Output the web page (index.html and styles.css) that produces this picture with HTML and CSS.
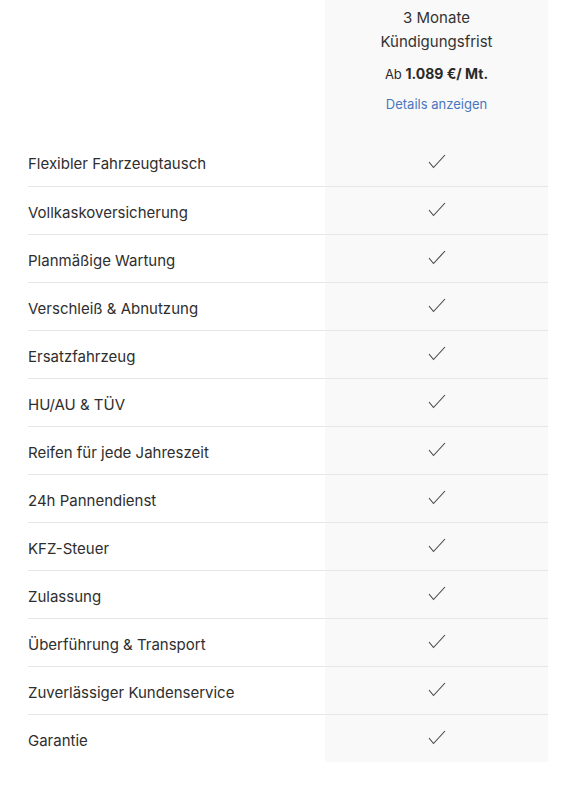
FILE: index.html
```html
<!DOCTYPE html>
<html lang="de">
<head>
<meta charset="utf-8">
<link rel="stylesheet" href="styles.css">
</head>
<body>
<div class="table">
  <div class="row head">
    <div class="label"></div>
    <div class="plan">
      <div class="title">3 Monate<br>Kündigungsfrist</div>
      <div class="price">Ab <b>1.089 €/ Mt.</b></div>
      <a class="details" href="#">Details anzeigen</a>
    </div>
  </div>
  <div class="row"><div class="label">Flexibler Fahrzeugtausch</div><div class="plan"><svg class="check" viewBox="0 0 18 16"><polyline points="1,9 5.5,14.5 17,2"/></svg></div></div>
  <div class="row"><div class="label">Vollkaskoversicherung</div><div class="plan"><svg class="check" viewBox="0 0 18 16"><polyline points="1,9 5.5,14.5 17,2"/></svg></div></div>
  <div class="row"><div class="label">Planmäßige Wartung</div><div class="plan"><svg class="check" viewBox="0 0 18 16"><polyline points="1,9 5.5,14.5 17,2"/></svg></div></div>
  <div class="row"><div class="label">Verschleiß &amp; Abnutzung</div><div class="plan"><svg class="check" viewBox="0 0 18 16"><polyline points="1,9 5.5,14.5 17,2"/></svg></div></div>
  <div class="row"><div class="label">Ersatzfahrzeug</div><div class="plan"><svg class="check" viewBox="0 0 18 16"><polyline points="1,9 5.5,14.5 17,2"/></svg></div></div>
  <div class="row"><div class="label">HU/AU &amp; TÜV</div><div class="plan"><svg class="check" viewBox="0 0 18 16"><polyline points="1,9 5.5,14.5 17,2"/></svg></div></div>
  <div class="row"><div class="label">Reifen für jede Jahreszeit</div><div class="plan"><svg class="check" viewBox="0 0 18 16"><polyline points="1,9 5.5,14.5 17,2"/></svg></div></div>
  <div class="row"><div class="label">24h Pannendienst</div><div class="plan"><svg class="check" viewBox="0 0 18 16"><polyline points="1,9 5.5,14.5 17,2"/></svg></div></div>
  <div class="row"><div class="label">KFZ-Steuer</div><div class="plan"><svg class="check" viewBox="0 0 18 16"><polyline points="1,9 5.5,14.5 17,2"/></svg></div></div>
  <div class="row"><div class="label">Zulassung</div><div class="plan"><svg class="check" viewBox="0 0 18 16"><polyline points="1,9 5.5,14.5 17,2"/></svg></div></div>
  <div class="row"><div class="label">Überführung &amp; Transport</div><div class="plan"><svg class="check" viewBox="0 0 18 16"><polyline points="1,9 5.5,14.5 17,2"/></svg></div></div>
  <div class="row"><div class="label">Zuverlässiger Kundenservice</div><div class="plan"><svg class="check" viewBox="0 0 18 16"><polyline points="1,9 5.5,14.5 17,2"/></svg></div></div>
  <div class="row"><div class="label">Garantie</div><div class="plan"><svg class="check" viewBox="0 0 18 16"><polyline points="1,9 5.5,14.5 17,2"/></svg></div></div>
</div>
</body>
</html>
```
FILE: styles.css
```css
html, body {
  margin: 0;
  padding: 0;
  background: #fff;
}
body {
  font-family: Inter, "Open Sans", "Liberation Sans", sans-serif;
  color: #2e2e2e;
}
.table {
  width: 520px;
  margin-left: 28px;
}
.row {
  display: grid;
  grid-template-columns: 297px 223px;
  height: 48px;
  box-sizing: border-box;
}
.row + .row + .row {
  border-top: 1px solid #e6e6e6;
}
.label {
  display: flex;
  align-items: center;
  font-size: 15px;
  padding-top: 3px;
}
.plan {
  background: #f9f9f9;
  display: flex;
  align-items: center;
  justify-content: center;
}
.row.head {
  height: 138px;
}
.head .plan {
  flex-direction: column;
  justify-content: flex-start;
  padding-top: 6px;
  box-sizing: border-box;
  text-align: center;
}
.title {
  font-size: 15px;
  line-height: 24px;
  color: #333;
}
.price {
  margin-top: 10px;
  font-size: 13px;
  line-height: 20px;
  color: #2a2a2a;
}
.price b {
  font-size: 14px;
  font-weight: 700;
}
.details {
  margin-top: 10px;
  font-size: 13px;
  line-height: 20px;
  color: #4a76c0;
  text-decoration: none;
}
.check {
  width: 18px;
  height: 16px;
  fill: none;
  stroke: #444;
  stroke-width: 1.1;
  margin-bottom: 3px;
}
```
